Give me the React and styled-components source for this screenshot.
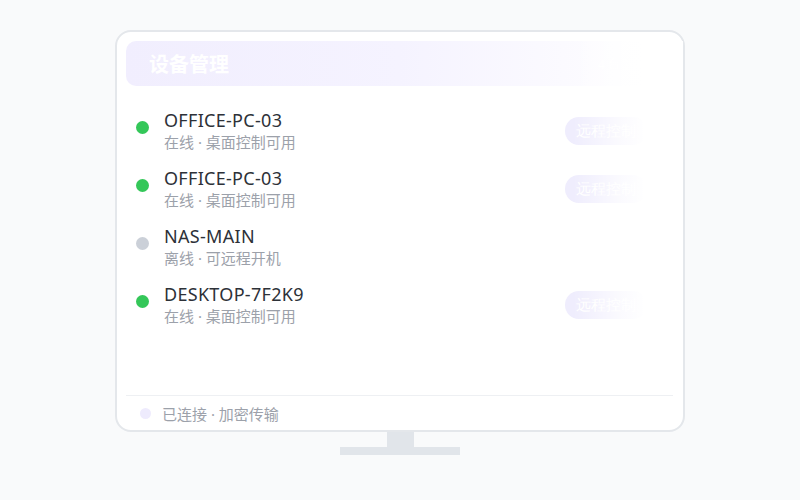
import React from "react";
import styled, { createGlobalStyle } from "styled-components";

const Global = createGlobalStyle`
  html, body { margin: 0; padding: 0; background: #f9fafb; }
  body { font-family: "Noto Sans", "Noto Sans CJK SC", sans-serif; }
`;

const Page = styled.div`
  width: 800px;
  height: 500px;
  display: flex;
  flex-direction: column;
  align-items: center;
  padding-top: 30px;
  box-sizing: border-box;
`;

const Monitor = styled.div`
  position: relative;
  width: 570px;
  height: 402px;
  box-sizing: border-box;
  border: 2px solid #e4e7eb;
  border-radius: 16px;
  background: #ffffff;
  padding: 9px 11px 0 9px;
  display: flex;
  flex-direction: column;
`;

const Header = styled.div`
  height: 45px;
  flex-shrink: 0;
  border-radius: 10px;
  background: linear-gradient(90deg, #f1eefe 0%, #f5f3ff 50%, #fbfaff 80%, #ffffff 100%);
  display: flex;
  align-items: center;
  justify-content: space-between;
  padding: 0 28px 0 23px;
`;

const Title = styled.div`
  font-size: 20px;
  font-weight: 700;
  color: #ffffff;
  font-family: "Noto Sans CJK SC", sans-serif;
`;

const HeaderMeta = styled.div`
  font-size: 12px;
  color: #ffffff;
`;

const List = styled.div`
  flex: 1;
  display: flex;
  flex-direction: column;
  padding-top: 23px;
`;

const Row = styled.div`
  height: 58px;
  display: flex;
  align-items: flex-start;
  padding: 0 25px 0 10px;
`;

const Dot = styled.span`
  width: 13px;
  height: 13px;
  border-radius: 50%;
  background: ${(p) => (p.$online ? "#34c759" : "#cbd0d8")};
  margin-top: 12px;
  flex-shrink: 0;
`;

const Info = styled.div`
  flex: 1;
  margin-left: 15px;
  display: flex;
  flex-direction: column;
`;

const Name = styled.div`
  font-size: 18px;
  line-height: 23px;
  color: #2d3138;
  letter-spacing: 0.3px;
`;

const Sub = styled.div`
  font-size: 15px;
  line-height: 20px;
  color: #9ca1aa;
`;

const Action = styled.div`
  margin-top: 8px;
  height: 28px;
  border-radius: 14px;
  background: #efedfd;
  padding: 0 11px;
  display: flex;
  align-items: center;
  font-family: serif;
  font-size: 15px;
  color: #ffffff;
`;

const Fade = styled.div`
  position: absolute;
  top: 9px;
  right: 0;
  width: 110px;
  bottom: 40px;
  background: linear-gradient(90deg, rgba(255,255,255,0) 0%, rgba(255,255,255,0.7) 40%, #ffffff 65%);
  pointer-events: none;
`;

const Footer = styled.div`
  height: 34px;
  flex-shrink: 0;
  border-top: 1px solid #eef0f3;
  margin-right: -1px;
  display: flex;
  align-items: center;
  padding-left: 14px;
  gap: 11px;
`;

const FootDot = styled.span`
  width: 11px;
  height: 11px;
  border-radius: 50%;
  background: #eeebfd;
`;

const FootText = styled.span`
  font-size: 15px;
  color: #9ca1aa;
`;

const Neck = styled.div`
  width: 27px;
  height: 15px;
  background: #e1e5ea;
`;

const Base = styled.div`
  width: 120px;
  height: 8px;
  background: #e1e5ea;
`;

const devices = [
  { name: "OFFICE-PC-03", sub: "在线 · 桌面控制可用", online: true },
  { name: "OFFICE-PC-03", sub: "在线 · 桌面控制可用", online: true },
  { name: "NAS-MAIN", sub: "离线 · 可远程开机", online: false },
  { name: "DESKTOP-7F2K9", sub: "在线 · 桌面控制可用", online: true },
];

export default function App() {
  return (
    <Page>
      <Global />
      <Monitor>
        <Header>
          <Title>设备管理</Title>
          <HeaderMeta>4 台设备</HeaderMeta>
        </Header>
        <List>
          {devices.map((d, i) => (
            <Row key={i}>
              <Dot $online={d.online} />
              <Info>
                <Name>{d.name}</Name>
                <Sub>{d.sub}</Sub>
              </Info>
              {d.online && <Action>远程控制</Action>}
            </Row>
          ))}
        </List>
        <Fade />
        <Footer>
          <FootDot />
          <FootText>已连接 · 加密传输</FootText>
        </Footer>
      </Monitor>
      <Neck />
      <Base />
    </Page>
  );
}
